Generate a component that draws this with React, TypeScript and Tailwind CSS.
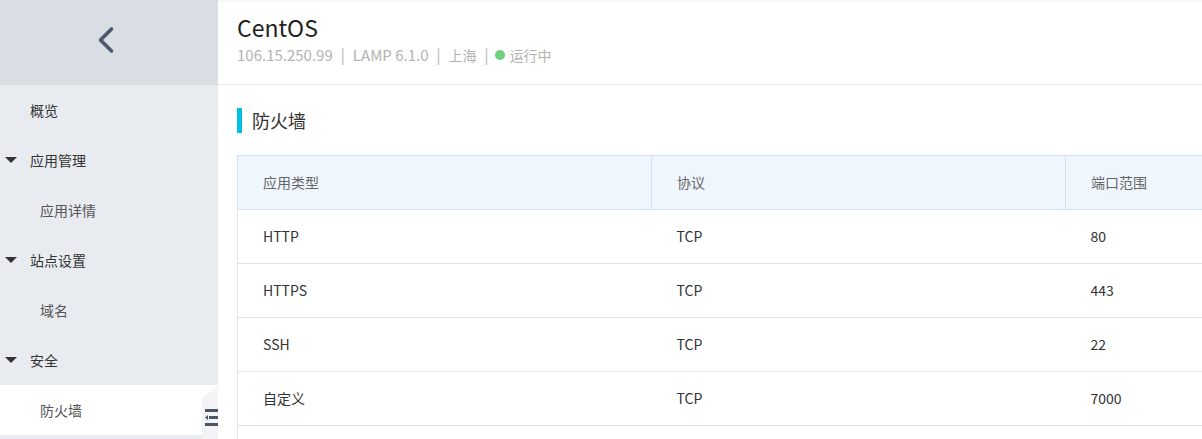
import { ChevronLeft } from 'lucide-react';

const font = { fontFamily: '"Noto Sans CJK SC", "Noto Sans", sans-serif' };

type MenuItem = { label: string; level: 0 | 1; group?: boolean; active?: boolean };

const MENU: MenuItem[] = [
  { label: '概览', level: 0 },
  { label: '应用管理', level: 0, group: true },
  { label: '应用详情', level: 1 },
  { label: '站点设置', level: 0, group: true },
  { label: '域名', level: 1 },
  { label: '安全', level: 0, group: true },
  { label: '防火墙', level: 1, active: true },
];

const ROWS = [
  ['HTTP', 'TCP', '80'],
  ['HTTPS', 'TCP', '443'],
  ['SSH', 'TCP', '22'],
  ['自定义', 'TCP', '7000'],
];

function Sidebar() {
  return (
    <aside className="relative w-[218px] shrink-0 bg-[#e8ebf0] h-[439px]">
      <div className="h-[85px] bg-[#d9dde4] flex items-center justify-center pr-[6px] pb-[6px]">
        <ChevronLeft className="w-[44px] h-[44px] text-[#4b5a70]" strokeWidth={2} />
      </div>
      {MENU.map(m => (
        <div key={m.label}
          className={`h-[50px] flex items-center text-[14px] ${m.active ? 'bg-white' : ''} ${m.level === 1 ? 'pl-[40px] text-[#555]' : 'pl-[30px] text-[#333]'} relative`}>
          {m.group && (
            <span className="absolute left-[5px] top-[22px] w-0 h-0 border-l-[6px] border-r-[6px] border-t-[6px] border-l-transparent border-r-transparent border-t-[#333]" />
          )}
          {m.label}
        </div>
      ))}
      <div className="absolute right-0 top-[386px] w-[16px] h-[53px] bg-[#f4f4f6] [clip-path:polygon(0_12px,100%_0,100%_100%,0_100%)]">
        <svg width="16" height="20" viewBox="0 0 16 20" className="absolute left-[2px] top-[23px]">
          <rect x="1" y="0" width="15" height="3" fill="#4b5568" />
          <polygon points="1,8.5 4,6 4,11" fill="#4b5568" />
          <rect x="5" y="7" width="11" height="3" fill="#4b5568" />
          <rect x="1" y="14" width="15" height="3" fill="#4b5568" />
        </svg>
      </div>
    </aside>
  );
}

export default function App() {
  return (
    <div className="flex w-[1202px] h-[439px] overflow-hidden bg-white" style={font}>
      <Sidebar />
      <main className="flex-1 min-w-0 overflow-hidden">
        <header className="h-[85px] border-b border-[#e4e9ef] pl-[19px] pt-[12px] shadow-[inset_0_3px_3px_-2px_rgba(0,0,0,0.06)]">
          <h1 className="text-[23px] leading-[30px] text-[#222]">CentOS</h1>
          <p className="mt-[2px] text-[15px] text-[#b3b3b3] flex items-center gap-[8px]">
            <span>106.15.250.99</span><span>|</span><span>LAMP 6.1.0</span><span>|</span><span className="text-[14px]">上海</span><span>|</span>
            <span className="inline-flex items-center gap-[5px] -ml-[2px] text-[14px]">
              <span className="w-[10px] h-[10px] rounded-full bg-[#6fcf7f]" />运行中
            </span>
          </p>
        </header>

        <div className="pl-[19px] pt-[23px]">
          <div className="flex items-center h-[25px]">
            <span className="w-[5px] h-[25px] bg-[#00c1de]" />
            <span className="ml-[10px] text-[18px] text-[#333]">防火墙</span>
          </div>

          <table className="mt-[22px] w-[1242px] table-fixed border-collapse text-[14px]">
            <colgroup>
              <col className="w-[414px]" /><col className="w-[414px]" /><col className="w-[414px]" />
            </colgroup>
            <thead>
              <tr className="h-[54px] bg-[#eff6fe]">
                {['应用类型', '协议', '端口范围'].map(h => (
                  <th key={h} className="border border-[#cfe2f7] pl-[25px] text-left font-normal text-[#666]">{h}</th>
                ))}
              </tr>
            </thead>
            <tbody>
              {ROWS.map(r => (
                <tr key={r[0]} className="h-[54px] border-b border-[#e3e3e3]">
                  {r.map((c, i) => (
                    <td key={i} className={`pl-[25px] text-[#333] ${i === 0 ? 'border-l border-[#e3e3e3]' : ''}`}>{c}</td>
                  ))}
                </tr>
              ))}
              <tr className="h-[54px]"><td className="border-l border-[#e3e3e3]" /><td /><td /></tr>
            </tbody>
          </table>
        </div>
      </main>
    </div>
  );
}
